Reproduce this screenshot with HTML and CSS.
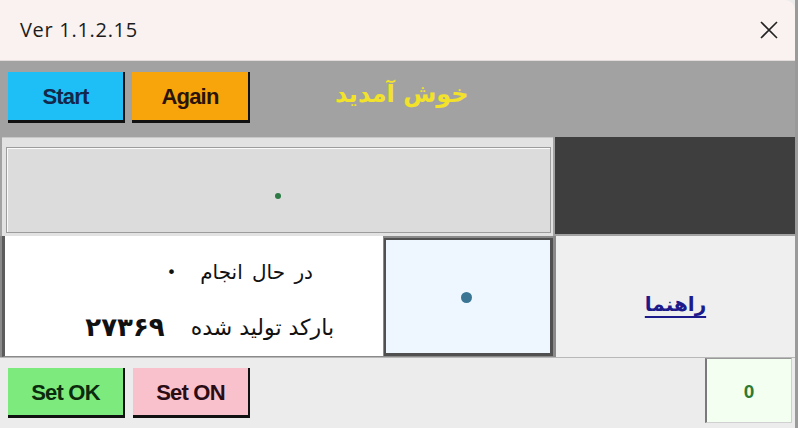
FILE: index.html
```html
<!DOCTYPE html>
<html lang="fa">
<head>
<meta charset="utf-8">
<link rel="stylesheet" href="styles.css">
</head>
<body>
<div class="window">
  <div class="titlebar">
    <span class="title">Ver 1.1.2.15</span>
    <svg class="close" width="20" height="20" viewBox="0 0 20 20"><path d="M2 2 L18 18 M18 2 L2 18" stroke="#222" stroke-width="1.6" fill="none"/></svg>
  </div>
  <div class="toolbar">
    <button class="btn start">Start</button>
    <button class="btn again">Again</button>
    <span class="welcome" dir="rtl">خوش آمدید</span>
  </div>
  <div class="row2">
    <div class="r2-left"><div class="r2-inner"><span class="gdot"></span></div></div>
    <div class="r2-dark"></div>
  </div>
  <div class="row3">
    <div class="info">
      <div class="line l1" dir="rtl"><span class="lbl">در حال انجام</span><span class="bullet">•</span></div>
      <div class="line l2" dir="rtl"><span class="lbl">بارکد تولید شده</span><span class="num">۲۷۳۶۹</span></div>
    </div>
    <div class="status"><span class="bdot"></span></div>
    <div class="help"><a class="helplink" dir="rtl">راهنما</a></div>
  </div>
  <div class="bottom">
    <button class="btn setok">Set OK</button>
    <button class="btn seton">Set ON</button>
    <div class="spacer"></div>
    <div class="counter">0</div>
  </div>
</div>
</body>
</html>
```
FILE: styles.css
```css
html, body { margin: 0; padding: 0; }
body { width: 798px; height: 428px; overflow: hidden; background: #ececec; font-family: "DejaVu Sans", sans-serif; }
.window { width: 798px; height: 428px; box-sizing: border-box; border-right: 3px solid #9a9a9a; display: flex; flex-direction: column; background: #ececec; }
.titlebar { height: 61px; flex: none; background: #f9f2f1; display: flex; align-items: center; justify-content: space-between; padding: 0 20px 0 20px; box-sizing: border-box; border-top-right-radius: 10px; border-bottom: 1px solid #e2dcdb; }
.title { font-family: "Open Sans", "Noto Sans", sans-serif; font-size: 20px; letter-spacing: 0.7px; color: #1c1c1c; margin-top: -2px; }
.close { margin-top: -1px; margin-right: -4px; }
.toolbar { height: 76px; flex: none; background: #a2a2a2; display: flex; align-items: flex-start; padding: 11px 0 0 8px; box-sizing: border-box; gap: 7px; }
.btn { font-family: "Liberation Sans", Arial, sans-serif; font-weight: bold; font-size: 22px; letter-spacing: -0.8px; border: none; border-right: 2px solid #111; border-bottom: 3px solid #111; box-sizing: border-box; height: 51px; padding: 2px 0 0 0; }
.start { width: 117px; background: #1ebef6; color: #13284a; }
.again { width: 118px; background: #f8a50c; color: #2a140a; }
.welcome { font-family: "DejaVu Sans", sans-serif; font-weight: bold; font-size: 24px; color: #f2e22a; margin-left: 78px; margin-top: 8px; letter-spacing: -0.5px; }
.row2 { height: 99px; flex: none; display: flex; background: #a2a2a2; }
.r2-left { width: 551px; margin-left: 2px; background: #e2e2e2; padding: 9px 2px 3px 4px; box-sizing: border-box; border-top: 1px solid #c8c8c8; }
.r2-inner { height: 100%; box-sizing: border-box; background: #dcdcdc; border: 1px solid #9c9c9c; box-shadow: inset 1px 1px 0 #fafafa; display: flex; align-items: center; justify-content: center; }
.gdot { width: 6px; height: 6px; border-radius: 50%; background: #2c7a44; margin-left: -2px; margin-top: 12px; }
.r2-dark { flex: 1; margin-left: 2px; background: #3e3e3e; margin-bottom: 2px; }
.row3 { height: 121px; flex: none; display: flex; background: #8a8a8a; }
.info { width: 381px; margin-left: 2px; border-left: 3px solid #5c5c5c; background: #fff; box-sizing: border-box; border-bottom: 1px solid #8a8a8a; display: flex; flex-direction: column; }
.line { display: flex; align-items: center; color: #111; box-sizing: border-box; }
.l1 { height: 72px; padding-right: 70px; font-size: 20px; word-spacing: 3px; }
.l1 .bullet { margin-right: 24px; font-size: 16px; }
.l2 { height: 38px; padding-right: 49px; font-size: 22px; }
.l2 .num { margin-right: 26px; font-size: 26px; font-weight: bold; letter-spacing: 1px; }
.status { width: 169px; margin-left: 1px; margin-top: 2px; margin-bottom: 1px; background: #eef7ff; border: 2px solid #505050; border-right-width: 3px; border-bottom-width: 3px; box-sizing: border-box; display: flex; align-items: center; justify-content: center; }
.bdot { width: 11px; height: 11px; border-radius: 50%; background: #3a7694; margin-top: 2px; margin-left: -4px; }
.help { flex: 1; margin-left: 3px; background: #efefef; display: flex; align-items: center; justify-content: center; }
.helplink { font-weight: bold; font-size: 20px; color: #1d1b8c; text-decoration: underline; text-underline-offset: 5px; margin-top: 14px; }
.bottom { flex: 1; display: flex; align-items: flex-start; background: #ececec; border-top: 1px solid #b8b8b8; padding-left: 8px; gap: 8px; box-sizing: border-box; }
.setok { width: 117px; margin-top: 10px; background: #7dea7d; color: #0c2a0c; height: 50px; }
.seton { width: 117px; margin-top: 10px; background: #f9c1cb; color: #2c0c14; height: 50px; }
.spacer { flex: 1; }
.counter { width: 87px; height: 65px; margin-right: 3px; background: #f2fff1; border-left: 2px solid #7a7a7a; border-top: 1px solid #9a9a9a; border-right: 1px solid #d0d0d0; border-bottom: 1px solid #d0d0d0; box-sizing: border-box; display: flex; align-items: center; justify-content: center; font-family: "Liberation Sans", Arial, sans-serif; font-weight: bold; font-size: 19px; color: #2f7a32; padding-top: 2px; }
```
